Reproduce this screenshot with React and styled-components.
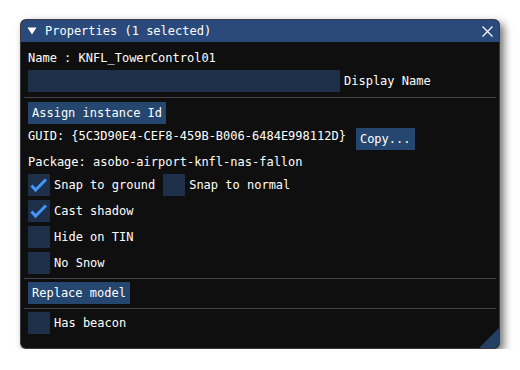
import React from 'react';
import styled, { createGlobalStyle } from 'styled-components';

const GlobalStyle = createGlobalStyle`
    html, body {
        margin: 0;
        padding: 0;
        background: #ffffff;
    }
    body {
        font: 12px/16px "DejaVu Sans Mono", "Liberation Mono", monospace;
        color: #ffffff;
    }
`;

const Page = styled.div`
    padding: 19px 0 0 20px;
`;

const Window = styled.div`
    position: relative;
    width: 480px;
    height: 330px;
    box-sizing: border-box;
    background: #0f0f0f;
    border-radius: 6px;
    border: 1px solid rgba(110, 110, 128, 0.45);
    box-shadow: 4px 4px 9px rgba(0, 0, 0, 0.55);
    overflow: hidden;
    display: flex;
    flex-direction: column;
`;

const TitleBar = styled.div`
    height: 22px;
    background: #294a7a;
    display: flex;
    align-items: center;
    padding: 0 6px;
    gap: 8px;
    flex-shrink: 0;
`;

const Title = styled.div`
    flex: 1;
    line-height: 22px;
    white-space: nowrap;
`;

const Body = styled.div`
    padding: 8px 7px 0 7px;
    display: flex;
    flex-direction: column;
    gap: 4px;
`;

const Row = styled.div`
    display: flex;
    align-items: ${props => props.top ? 'flex-start' : 'center'};
    gap: ${props => props.gap || 8}px;
    height: ${props => props.tall ? 22 : 16}px;
    white-space: nowrap;
`;

const Input = styled.div`
    width: 312px;
    height: 22px;
    background: #1d2f49;
`;

const Label = styled.span`
    line-height: 16px;
`;

const Button = styled.div`
    height: 22px;
    line-height: 22px;
    padding: 0 4px;
    background: #25476f;
    white-space: nowrap;
`;

const Separator = styled.div`
    height: 1px;
    margin: ${props => props.first ? '1px -4px 0' : '0 -4px -1px'};
    background: #43434d;
`;

const CheckItem = styled.div`
    display: flex;
    align-items: center;
    gap: 4px;
`;

const Box = styled.div`
    width: 22px;
    height: 22px;
    background: #1d2f49;
    display: flex;
`;

const Grip = styled.div`
    position: absolute;
    right: 0;
    bottom: 0;
    width: 20px;
    height: 20px;
    background: #243f64;
    clip-path: polygon(100% 0, 100% 100%, 0 100%);
`;

const Check = ({ on, label }) => (
    <CheckItem>
        <Box>
            {on && (
                <svg width="22" height="22" viewBox="0 0 22 22">
                    <polyline points="3.5,11.5 7.5,16 18,5.5" fill="none" stroke="#4296fa" strokeWidth="3" />
                </svg>
            )}
        </Box>
        <Label>{label}</Label>
    </CheckItem>
);

export default function App() {
    return (
        <Page>
            <GlobalStyle />
            <Window>
                <TitleBar>
                    <svg width="10" height="8" viewBox="0 0 10 8">
                        <polygon points="0.5,0.5 9.5,0.5 5,7.5" fill="#ffffff" />
                    </svg>
                    <Title>Properties (1 selected)</Title>
                    <svg width="11" height="11" viewBox="0 0 11 11">
                        <path d="M0.5 0.5 L10.5 10.5 M10.5 0.5 L0.5 10.5" stroke="#ffffff" strokeWidth="1.2" />
                    </svg>
                </TitleBar>
                <Body>
                    <Row>
                        <Label>Name : KNFL_TowerControl01</Label>
                    </Row>
                    <Row tall gap={4}>
                        <Input />
                        <Label>Display Name</Label>
                    </Row>
                    <Separator first />
                    <Row tall>
                        <Button>Assign instance Id</Button>
                    </Row>
                    <Row tall top gap={10}>
                        <Label>GUID: {'{'}5C3D90E4-CEF8-459B-B006-6484E998112D{'}'}</Label>
                        <Button>Copy...</Button>
                    </Row>
                    <Row>
                        <Label>Package: asobo-airport-knfl-nas-fallon</Label>
                    </Row>
                    <Row tall>
                        <Check on label="Snap to ground" />
                        <Check label="Snap to normal" />
                    </Row>
                    <Row tall>
                        <Check on label="Cast shadow" />
                    </Row>
                    <Row tall>
                        <Check label="Hide on TIN" />
                    </Row>
                    <Row tall>
                        <Check label="No Snow" />
                    </Row>
                    <Separator />
                    <Row tall>
                        <Button>Replace model</Button>
                    </Row>
                    <Separator />
                    <Row tall>
                        <Check label="Has beacon" />
                    </Row>
                </Body>
                <Grip />
            </Window>
        </Page>
    );
}
